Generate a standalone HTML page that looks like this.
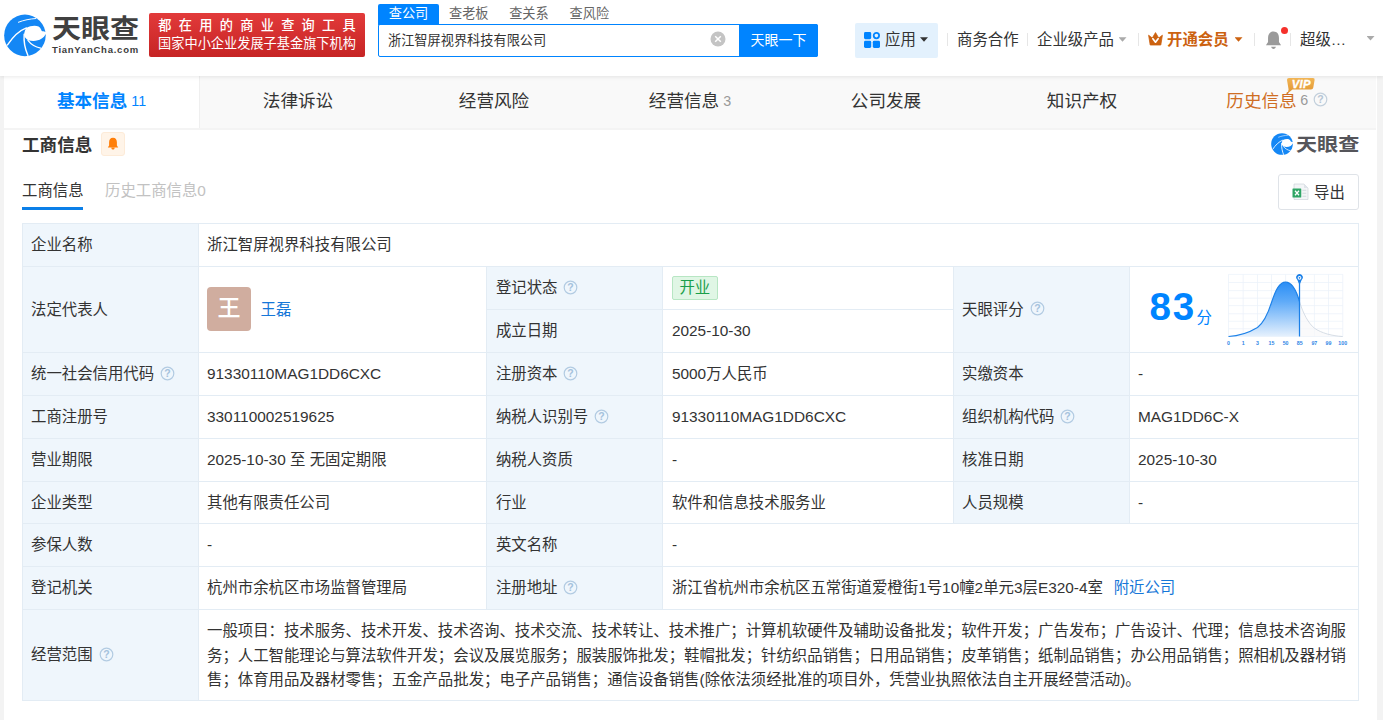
<!DOCTYPE html>
<html lang="zh-CN">
<head>
<meta charset="utf-8">
<title>浙江智屏视界科技有限公司 - 天眼查</title>
<style>
*{box-sizing:border-box;margin:0;padding:0}
html,body{width:1383px;height:720px;overflow:hidden;background:#f3f3f3}
body{font-family:"Liberation Sans","Noto Sans CJK SC",sans-serif;font-size:14px;color:#333;position:relative}
.abs{position:absolute}
/* header */
#hd{position:absolute;left:0;top:0;width:1383px;height:76px;background:#fff;box-shadow:0 1px 4px rgba(0,0,0,.09);z-index:5}
#hd .t{position:absolute;white-space:nowrap;line-height:1}
#banner{position:absolute;left:149px;top:13px;width:216px;height:44px;background:linear-gradient(#e23a3a,#c62424);border-radius:2px;color:#fff;text-align:center}
#banner div{position:absolute;left:0;width:216px;white-space:nowrap;line-height:1}
#stab{position:absolute;left:378px;top:4px;width:61px;height:20.5px;background:#0084ff;color:#fff;border-radius:2px 2px 0 0;font-size:13.2px;text-align:center;line-height:19px}
#sbox{position:absolute;left:378px;top:24px;width:440px;height:33px;border:1px solid #0084ff;border-radius:2px;background:#fff}
#sbtn{position:absolute;left:739px;top:24px;width:79px;height:33px;background:#0084ff;color:#fff;border-radius:0 2px 2px 0;text-align:center;line-height:32px;font-size:14px}
#app{position:absolute;left:855px;top:23px;width:83px;height:35px;background:#e3f1fd;border-radius:2px}
.sep{position:absolute;top:33px;width:1px;height:13px;background:#e6e6e6}
/* tabs */
#tabs{position:absolute;left:4px;top:76px;width:1372px;height:54px;background:#f9f9f9;border-bottom:2px solid #f4f4f4}
#tabs .tb{position:absolute;top:0;height:52px;width:196px;text-align:center;line-height:51px;font-size:17.6px;color:#333;white-space:nowrap}
#tabs .tb.on{background:#fff;color:#0084ff;font-weight:bold;border-right:1px solid #efefef;padding-right:0}
#tabs .n{font-size:14.3px;color:#999;font-weight:normal;margin-left:4px;position:relative;top:-1.5px}
#main{position:absolute;left:4px;top:76px;width:1373px;height:660px;background:#fff}
/* table */
#tbl{position:absolute;left:22px;top:223px;width:1336px;border-collapse:collapse;table-layout:fixed;font-size:15.4px;color:#333}
#tbl td{border:1px solid #e3ecf4;padding:0 8px 0 8px;vertical-align:middle;white-space:nowrap;line-height:20px}
#tbl td.l{background:#eff6fc}
#tbl td.p{padding-left:8.9px}
.q{display:inline-block;vertical-align:middle;margin-left:6px;position:relative;top:-1.5px}
a{color:#1677d8;text-decoration:none}
.av{display:inline-block;width:44px;height:44px;border-radius:4px;background:#d0ad9f;color:#fff;font-size:23px;font-weight:500;line-height:43px;text-align:center;vertical-align:middle;margin-left:0;position:relative;top:-1px}
.nm{display:inline-block;vertical-align:middle;margin-left:9.5px;color:#1677d8}
.tag{display:inline-block;height:24px;line-height:22px;padding:0 6.5px;border:1px solid #b7e6c3;background:#e0f6e5;color:#1a9f4a;border-radius:2px;margin-left:0;height:24.4px;position:relative;top:-.3px}

</style>
</head>
<body>
<div id="hd">
  <svg class="abs" style="left:0;top:8px" width="70" height="54" viewBox="0 0 933 720">
    <circle cx="332" cy="365" r="277" fill="#1487f5"/>
    <path d="M350 268 C420 225 525 222 548 285 C553 302 562 314 578 310 L640 330 L625 352 L606 350 C585 405 500 462 375 430 C338 400 318 378 322 350 C325 318 336 290 350 268 Z" fill="#fff"/>
    <path d="M100 492 C165 395 250 305 352 266" fill="none" stroke="#fff" stroke-width="19" stroke-linecap="round"/>
    <path d="M245 190 C320 160 400 146 478 140" fill="none" stroke="#fff" stroke-width="13" stroke-linecap="round"/>
    <path d="M322 350 C314 450 340 560 372 634" fill="none" stroke="#fff" stroke-width="19" stroke-linecap="round"/>
    <path d="M372 432 C410 482 470 520 542 536" fill="none" stroke="#fff" stroke-width="17" stroke-linecap="round"/>
  </svg>
  <div class="t" style="left:52px;top:16px;font-size:26px;font-weight:bold;color:#404040;transform:scaleX(1.115);transform-origin:0 0">天眼查</div>
  <div class="t" style="left:52px;top:45px;font-size:9.5px;font-weight:bold;color:#3c3c3c;letter-spacing:.75px">TianYanCha.com</div>
  <div id="banner">
    <div style="top:6px;font-size:13.2px;font-weight:500;letter-spacing:7.3px;padding-left:7.3px">都在用的商业查询工具</div>
    <div style="top:24px;font-size:13.2px;letter-spacing:0">国家中小企业发展子基金旗下机构</div>
  </div>
  <div id="stab">查公司</div>
  <div class="t" style="left:449px;top:6.5px;font-size:13.2px;color:#666">查老板</div>
  <div class="t" style="left:509.2px;top:6.5px;font-size:13.2px;color:#666">查关系</div>
  <div class="t" style="left:569.6px;top:6.5px;font-size:13.2px;color:#666">查风险</div>
  <div id="sbox"></div>
  <div class="t" style="left:388px;top:34px;font-size:13.2px;color:#333">浙江智屏视界科技有限公司</div>
  <svg class="abs" style="left:710px;top:31px" width="16" height="16" viewBox="0 0 16 16"><circle cx="8" cy="8" r="7.5" fill="#c4c4c4"/><path d="M5.2 5.2 L10.8 10.8 M10.8 5.2 L5.2 10.8" stroke="#fff" stroke-width="1.5"/></svg>
  <div id="sbtn">天眼一下</div>
  <div id="app"></div>
  <svg class="abs" style="left:864px;top:32px" width="16" height="16" viewBox="0 0 16 16"><rect x="0" y="0" width="7.2" height="7.2" rx="1.4" fill="#0084ff"/><rect x="0" y="8.8" width="7.2" height="7.2" rx="1.4" fill="#0084ff"/><rect x="8.8" y="8.8" width="7.2" height="7.2" rx="1.4" fill="#0084ff"/><circle cx="12.4" cy="3.6" r="2.7" fill="none" stroke="#0084ff" stroke-width="1.8"/></svg>
  <div class="t" style="left:885px;top:32px;font-size:15.4px;color:#333">应用</div>
  <div class="abs" style="left:920.0px;top:37.2px;width:8px;height:4.6px;background:#333;clip-path:polygon(0 0,100% 0,50% 100%)"></div>
  <div class="sep" style="left:947px"></div>
  <div class="t" style="left:957px;top:32px;font-size:15.4px;color:#333">商务合作</div>
  <div class="sep" style="left:1027px"></div>
  <div class="t" style="left:1037px;top:32px;font-size:15.4px;color:#333">企业级产品</div>
  <div class="abs" style="left:1118.5px;top:37.2px;width:8px;height:4.6px;background:#aaa;clip-path:polygon(0 0,100% 0,50% 100%)"></div>
  <div class="sep" style="left:1138px"></div>
  <svg class="abs" style="left:1148px;top:32px" width="15" height="14" viewBox="0 0 15 14"><path d="M0.6 3.2 L4.3 6 L7.5 0.6 L10.7 6 L14.4 3.2 L12.8 13 H2.2 Z" fill="#cc6210" stroke="#cc6210" stroke-width=".8" stroke-linejoin="round"/><path d="M4.9 6.8 L7.5 10.2 L10.1 6.8" fill="none" stroke="#fff" stroke-width="1.7" stroke-linejoin="round" stroke-linecap="round"/></svg>
  <div class="t" style="left:1167px;top:32px;font-size:15.4px;color:#cc6210;font-weight:bold">开通会员</div>
  <div class="abs" style="left:1234.5px;top:37.2px;width:8px;height:4.6px;background:#cc6210;clip-path:polygon(0 0,100% 0,50% 100%)"></div>
  <div class="sep" style="left:1254px"></div>
  <svg class="abs" style="left:1263.8px;top:29.8px" width="19" height="21" viewBox="0 0 18 20"><path d="M9 1.5 C5.5 1.5 3.8 4.2 3.8 7.5 L3.8 11.5 L1.8 14.5 L16.2 14.5 L14.2 11.5 L14.2 7.5 C14.2 4.2 12.5 1.5 9 1.5 Z" fill="#9a9a9a"/><path d="M6.8 16 L11.2 16 C11 17.4 10.1 18 9 18 C7.9 18 7 17.4 6.8 16Z" fill="#9a9a9a"/></svg>
  <div class="abs" style="left:1281px;top:26.8px;width:7.4px;height:7.4px;border-radius:50%;background:#f5302b"></div>
  <div class="sep" style="left:1290px"></div>
  <div class="t" style="left:1300px;top:32px;font-size:15.4px;color:#333">超级…</div>
  <div class="abs" style="left:1366.5px;top:36.0px;width:8px;height:4.6px;background:#aaa;clip-path:polygon(0 0,100% 0,50% 100%)"></div>
</div>

<div id="main"></div>
<div id="tabs">
  <div class="tb on" style="left:0">基本信息<span class="n" style="color:#0084ff">11</span></div>
  <div class="tb" style="left:196px">法律诉讼</div>
  <div class="tb" style="left:392px">经营风险</div>
  <div class="tb" style="left:588px">经营信息<span class="n">3</span></div>
  <div class="tb" style="left:784px">公司发展</div>
  <div class="tb" style="left:980px">知识产权</div>
  <div class="tb" style="left:1175px;color:#cf6e24">历史信息<span class="n" style="margin-left:3.5px;top:-2px">6</span><svg class="q" style="margin-left:4.5px;top:-2.5px" width="15" height="15" viewBox="0 0 15 15"><circle cx="7.5" cy="7.5" r="6.3" fill="none" stroke="#c3d0dc" stroke-width="1.2"/><text x="7.5" y="11.2" text-anchor="middle" font-size="10.5" font-family="Liberation Sans, sans-serif" font-weight="bold" fill="#b5c5d4">?</text></svg></div>
</div>

<div class="abs" style="left:22px;top:132.6px;font-size:17.6px;font-weight:bold;color:#333;line-height:24px;white-space:nowrap">工商信息</div>
<div class="abs" style="left:101px;top:132px;width:24px;height:24px;background:#fff4e8;border:1px solid #fdebd8;border-radius:3px"></div>
<svg class="abs" style="left:107px;top:137px" width="12" height="14" viewBox="0 0 12 14"><path d="M6 0.8 C3.4 0.8 2.1 2.9 2.1 5.3 L2.1 8.6 L0.8 10.6 L11.2 10.6 L9.9 8.6 L9.9 5.3 C9.9 2.9 8.6 0.8 6 0.8 Z" fill="#ff7f0a"/><path d="M4.3 10.4 L7.7 10.4 C7.6 11.9 6.9 12.6 6 12.6 C5.1 12.6 4.4 11.9 4.3 10.4Z" fill="#ff7f0a"/></svg>

<div class="abs" style="left:22px;top:181px;font-size:15.4px;color:#333;line-height:20px;white-space:nowrap">工商信息</div>
<div class="abs" style="left:22px;top:207px;width:61px;height:3px;background:#0b7fe8"></div>
<div class="abs" style="left:105px;top:181px;font-size:15.4px;color:#c2c2c2;line-height:20px;white-space:nowrap">历史工商信息0</div>

<div class="abs" style="left:1278px;top:174px;width:81px;height:36px;border:1px solid #dfe3e8;border-radius:3px;background:#fff"></div>
<div class="abs" style="left:1314px;top:182.6px;font-size:15.4px;color:#333;line-height:20px;white-space:nowrap">导出</div>

<svg class="abs" style="left:1210px;top:265px" width="160" height="90" viewBox="0 0 1280 720">
  <defs><linearGradient id="cg" x1="0" y1="0" x2="0" y2="1"><stop offset="0" stop-color="#2a8ef6"/><stop offset=".35" stop-color="#5eaaf8"/><stop offset="1" stop-color="#e6f1fd"/></linearGradient></defs>
  <g stroke="#ebf1f9" stroke-width="6" fill="none"><path d="M148 75V572" /><path d="M265 75V572" /><path d="M380 75V572" /><path d="M492 75V572" /><path d="M605 75V572" /><path d="M718 75V572" /><path d="M835 75V572" /><path d="M948 75V572" /><path d="M1062 75V572" /><path d="M148 75H1062" /><path d="M148 140H1062" /><path d="M148 205H1062" /><path d="M148 265H1062" /><path d="M148 325H1062" /><path d="M148 390H1062" /><path d="M148 450H1062" /><path d="M148 510H1062" /><path d="M148 572H1062" /></g>
  <path d="M716 292 C745 390 790 470 835 505 C890 545 980 568 1062 572 L716 572 Z" fill="#f6f7f9" opacity=".6"/>
  <path d="M148 572 C220 568 300 548 380 500 C440 455 470 370 492 300 C525 200 555 137 605 137 C655 137 690 200 716 292 L716 572 L148 572 Z" fill="url(#cg)"/>
  <path d="M148 572 C220 568 300 548 380 500 C440 455 470 370 492 300 C525 200 555 137 605 137 C655 137 690 200 716 292" fill="none" stroke="#1b80e8" stroke-width="9"/>
  <path d="M716 292 C745 390 790 470 835 505 C890 545 980 568 1062 572" fill="none" stroke="#c9d3dd" stroke-width="6"/>
  <path d="M716 572V120" stroke="#1b80e8" stroke-width="10"/>
  <path d="M716 160 L698 118 A26 26 0 1 1 734 118 Z" fill="#1b80e8"/>
  <circle cx="716" cy="102" r="15" fill="#fff"/><circle cx="716" cy="102" r="7" fill="#1b80e8"/>
  <g font-family="Liberation Sans, sans-serif" font-size="42" fill="#2f86e6" font-weight="bold"><text x="148" y="637" text-anchor="middle">0</text><text x="265" y="637" text-anchor="middle">1</text><text x="380" y="637" text-anchor="middle">3</text><text x="492" y="637" text-anchor="middle">15</text><text x="605" y="637" text-anchor="middle">50</text><text x="718" y="637" text-anchor="middle">85</text><text x="835" y="637" text-anchor="middle">97</text><text x="948" y="637" text-anchor="middle">99</text><text x="1062" y="637" text-anchor="middle">100</text></g>
</svg>
<div class="abs" style="left:1149.6px;top:285.3px;font-size:38.6px;font-weight:bold;color:#0084ff;line-height:44px;white-space:nowrap;letter-spacing:1.6px">83</div>
<div class="abs" style="left:1196.5px;top:307px;font-size:15.4px;color:#0084ff;line-height:22px;white-space:nowrap">分</div>
<svg class="abs" style="left:1290px;top:181px" width="20" height="22" viewBox="320 448 160 176">
  <path d="M352 472 H432 L464 504 V596 H352 Z" fill="#f3f5f7" stroke="#c9cfd6" stroke-width="5"/>
  <path d="M432 472 V504 H464 Z" fill="#dfe4e9"/>
  <path d="M420 522H450M420 546H450M420 570H450" stroke="#c5ccd3" stroke-width="6"/>
  <rect x="340" y="508" width="70" height="72" rx="4" fill="#2fa565"/>
  <path d="M360 526 L392 562 M392 526 L360 562" stroke="#fff" stroke-width="10"/>
</svg>
<svg class="abs" style="left:1270px;top:132px" width="24" height="24" viewBox="25 58 614 614">
    <circle cx="332" cy="365" r="277" fill="#1487f5"/>
    <path d="M350 268 C420 225 525 222 548 285 C553 302 562 314 578 310 L640 330 L625 352 L606 350 C585 405 500 462 375 430 C338 400 318 378 322 350 C325 318 336 290 350 268 Z" fill="#fff"/>
    <path d="M100 492 C165 395 250 305 352 266" fill="none" stroke="#fff" stroke-width="22" stroke-linecap="round"/>
    <path d="M245 190 C320 160 400 146 478 140" fill="none" stroke="#fff" stroke-width="14" stroke-linecap="round"/>
    <path d="M322 350 C314 450 340 560 372 634" fill="none" stroke="#fff" stroke-width="22" stroke-linecap="round"/>
    <path d="M372 432 C410 482 470 520 542 536" fill="none" stroke="#fff" stroke-width="20" stroke-linecap="round"/>
</svg>
<div class="abs" style="left:1295.5px;top:132.5px;font-size:18.2px;font-weight:bold;color:#55555a;line-height:24px;white-space:nowrap;transform:scaleX(1.16);transform-origin:0 0">天眼查</div>
<svg class="abs" style="left:1284px;top:76px;z-index:6" width="34" height="18" viewBox="0 0 34 18">
  <defs><linearGradient id="vg" x1="0" y1="0" x2="0" y2="1"><stop offset="0" stop-color="#f1b556"/><stop offset="1" stop-color="#e2952f"/></linearGradient></defs>
  <path d="M5 2 H29 Q31 2 30.6 4 L29.3 11.5 Q29 13.6 27 13.6 H8.5 L3.6 17.4 L4.6 13.4 L3 4 Q2.8 2 5 2Z" fill="url(#vg)"/>
  <text x="17.3" y="11.8" text-anchor="middle" font-family="Liberation Sans, sans-serif" font-size="11.2" font-weight="bold" font-style="italic" fill="#fff" stroke="#fff" stroke-width=".35" letter-spacing=".4">VIP</text>
</svg>
<table id="tbl">
<colgroup><col style="width:176px"><col style="width:288px"><col style="width:176px"><col style="width:291px"><col style="width:176px"><col style="width:229px"></colgroup>
<tr style="height:43px"><td class="l">企业名称</td><td colspan="5">浙江智屏视界科技有限公司</td></tr>
<tr style="height:43px"><td class="l" rowspan="2">法定代表人</td><td rowspan="2"><span class="av">王</span><a class="nm">王磊</a></td><td class="l p">登记状态<svg class="q" width="15" height="15" viewBox="0 0 15 15"><circle cx="7.5" cy="7.5" r="6.3" fill="none" stroke="#b2cbe2" stroke-width="1.2"/><text x="7.5" y="11.2" text-anchor="middle" font-size="10.5" font-family="Liberation Sans, sans-serif" font-weight="bold" fill="#a5c2dc">?</text></svg></td><td class="p"><span class="tag">开业</span></td><td class="l" rowspan="2">天眼评分<svg class="q" width="15" height="15" viewBox="0 0 15 15"><circle cx="7.5" cy="7.5" r="6.3" fill="none" stroke="#b2cbe2" stroke-width="1.2"/><text x="7.5" y="11.2" text-anchor="middle" font-size="10.5" font-family="Liberation Sans, sans-serif" font-weight="bold" fill="#a5c2dc">?</text></svg></td><td rowspan="2"></td></tr>
<tr style="height:43px"><td class="l p">成立日期</td><td class="p">2025-10-30</td></tr>
<tr style="height:43px"><td class="l">统一社会信用代码<svg class="q" width="15" height="15" viewBox="0 0 15 15"><circle cx="7.5" cy="7.5" r="6.3" fill="none" stroke="#b2cbe2" stroke-width="1.2"/><text x="7.5" y="11.2" text-anchor="middle" font-size="10.5" font-family="Liberation Sans, sans-serif" font-weight="bold" fill="#a5c2dc">?</text></svg></td><td>91330110MAG1DD6CXC</td><td class="l p">注册资本<svg class="q" width="15" height="15" viewBox="0 0 15 15"><circle cx="7.5" cy="7.5" r="6.3" fill="none" stroke="#b2cbe2" stroke-width="1.2"/><text x="7.5" y="11.2" text-anchor="middle" font-size="10.5" font-family="Liberation Sans, sans-serif" font-weight="bold" fill="#a5c2dc">?</text></svg></td><td class="p">5000万人民币</td><td class="l">实缴资本</td><td>-</td></tr>
<tr style="height:43px"><td class="l">工商注册号</td><td>330110002519625</td><td class="l p">纳税人识别号<svg class="q" width="15" height="15" viewBox="0 0 15 15"><circle cx="7.5" cy="7.5" r="6.3" fill="none" stroke="#b2cbe2" stroke-width="1.2"/><text x="7.5" y="11.2" text-anchor="middle" font-size="10.5" font-family="Liberation Sans, sans-serif" font-weight="bold" fill="#a5c2dc">?</text></svg></td><td class="p">91330110MAG1DD6CXC</td><td class="l">组织机构代码<svg class="q" width="15" height="15" viewBox="0 0 15 15"><circle cx="7.5" cy="7.5" r="6.3" fill="none" stroke="#b2cbe2" stroke-width="1.2"/><text x="7.5" y="11.2" text-anchor="middle" font-size="10.5" font-family="Liberation Sans, sans-serif" font-weight="bold" fill="#a5c2dc">?</text></svg></td><td>MAG1DD6C-X</td></tr>
<tr style="height:43px"><td class="l">营业期限</td><td>2025-10-30 至 无固定期限</td><td class="l p">纳税人资质</td><td class="p">-</td><td class="l">核准日期</td><td>2025-10-30</td></tr>
<tr style="height:42px"><td class="l">企业类型</td><td>其他有限责任公司</td><td class="l p">行业</td><td class="p">软件和信息技术服务业</td><td class="l">人员规模</td><td>-</td></tr>
<tr style="height:43px"><td class="l">参保人数</td><td>-</td><td class="l p">英文名称</td><td class="p" colspan="3">-</td></tr>
<tr style="height:43px"><td class="l">登记机关</td><td>杭州市余杭区市场监督管理局</td><td class="l p">注册地址<svg class="q" width="15" height="15" viewBox="0 0 15 15"><circle cx="7.5" cy="7.5" r="6.3" fill="none" stroke="#b2cbe2" stroke-width="1.2"/><text x="7.5" y="11.2" text-anchor="middle" font-size="10.5" font-family="Liberation Sans, sans-serif" font-weight="bold" fill="#a5c2dc">?</text></svg></td><td class="p" colspan="3">浙江省杭州市余杭区五常街道爱橙街1号10幢2单元3层E320-4室 <a style="margin-left:6.5px">附近公司</a></td></tr>
<tr style="height:91px"><td class="l">经营范围<svg class="q" width="15" height="15" viewBox="0 0 15 15"><circle cx="7.5" cy="7.5" r="6.3" fill="none" stroke="#b2cbe2" stroke-width="1.2"/><text x="7.5" y="11.2" text-anchor="middle" font-size="10.5" font-family="Liberation Sans, sans-serif" font-weight="bold" fill="#a5c2dc">?</text></svg></td><td colspan="5" style="white-space:normal;line-height:24.2px;padding-top:1.6px">一般项目：技术服务、技术开发、技术咨询、技术交流、技术转让、技术推广；计算机软硬件及辅助设备批发；软件开发；广告发布；广告设计、代理；信息技术咨询服务；人工智能理论与算法软件开发；会议及展览服务；服装服饰批发；鞋帽批发；针纺织品销售；日用品销售；皮革销售；纸制品销售；办公用品销售；照相机及器材销售；体育用品及器材零售；五金产品批发；电子产品销售；通信设备销售(除依法须经批准的项目外，凭营业执照依法自主开展经营活动)。</td></tr>
</table>
</body>
</html>
